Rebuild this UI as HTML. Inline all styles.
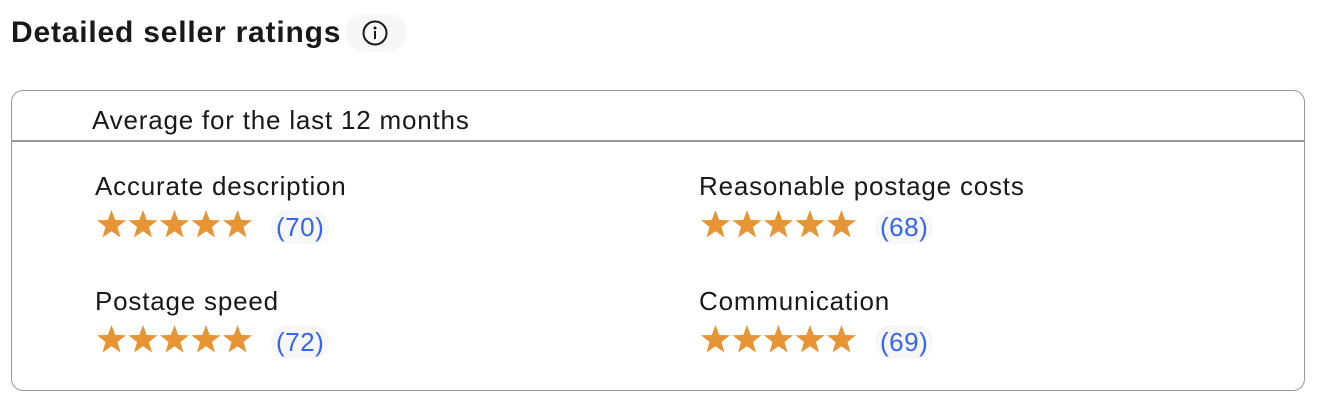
<!DOCTYPE html><html><head><style>
body{margin:0;width:1320px;height:412px;background:#fff;font-family:"Liberation Sans",Arial,sans-serif;color:#191919;position:relative;overflow:hidden}
.a{position:absolute}
h1{position:absolute;left:11px;top:14px;margin:0;font-size:30px;font-weight:bold;line-height:38px;letter-spacing:0.8px;white-space:nowrap}
.info{left:345px;top:14px;width:62px;height:38px;border-radius:19px;background:#f7f7f7}
.box{left:11px;top:90px;width:1292px;height:299px;border:1.5px solid #999;border-radius:12px}
.hl{left:12px;top:140px;width:1292px;height:1.5px;background:#999}
.lbl{font-size:26px;line-height:28px;letter-spacing:0.8px;white-space:nowrap}
.cnt{font-size:26px;color:#3665f3;background:#f7f7f7;border-radius:16px;padding:0 5px;line-height:34px;letter-spacing:0.5px}
</style></head><body>
<h1>Detailed seller ratings</h1>
<div class="a info"><svg class="a" style="left:17px;top:6px" width="26" height="26" viewBox="0 0 26 26"><circle cx="13" cy="13" r="11.5" fill="none" stroke="#191919" stroke-width="2"/><circle cx="13" cy="8" r="1.5" fill="#191919"/><rect x="12" y="11" width="2" height="8" fill="#191919"/></svg></div>
<div class="a box"></div><div class="a hl"></div>
<div class="a lbl" style="left:92px;top:106px">Average for the last 12 months</div>
<svg width="0" height="0" style="position:absolute"><defs><path id="s" d="M15.5 1 L19.2 11 L30 11.3 L21.5 18 L24.5 28.5 L15.5 22.3 L6.5 28.5 L9.5 18 L1 11.3 L11.8 11 Z" fill="#e69434"/></defs></svg>
<div class="a lbl" style="left:95px;top:172px">Accurate description</div>
<div class="a lbl" style="left:699px;top:172px">Reasonable postage costs</div>
<div class="a lbl" style="left:95px;top:287px">Postage speed</div>
<div class="a lbl" style="left:699px;top:287px">Communication</div>
<svg class="a" style="left:96px;top:209px" width="160" height="32"><use href="#s"/><use href="#s" x="31.5"/><use href="#s" x="63"/><use href="#s" x="94.5"/><use href="#s" x="126"/></svg>
<svg class="a" style="left:700px;top:209px" width="160" height="32"><use href="#s"/><use href="#s" x="31.5"/><use href="#s" x="63"/><use href="#s" x="94.5"/><use href="#s" x="126"/></svg>
<svg class="a" style="left:96px;top:324px" width="160" height="32"><use href="#s"/><use href="#s" x="31.5"/><use href="#s" x="63"/><use href="#s" x="94.5"/><use href="#s" x="126"/></svg>
<svg class="a" style="left:700px;top:324px" width="160" height="32"><use href="#s"/><use href="#s" x="31.5"/><use href="#s" x="63"/><use href="#s" x="94.5"/><use href="#s" x="126"/></svg>
<div class="a cnt" style="left:271px;top:210px">(70)</div>
<div class="a cnt" style="left:875px;top:210px">(68)</div>
<div class="a cnt" style="left:271px;top:325px">(72)</div>
<div class="a cnt" style="left:875px;top:325px">(69)</div>
</body></html>
